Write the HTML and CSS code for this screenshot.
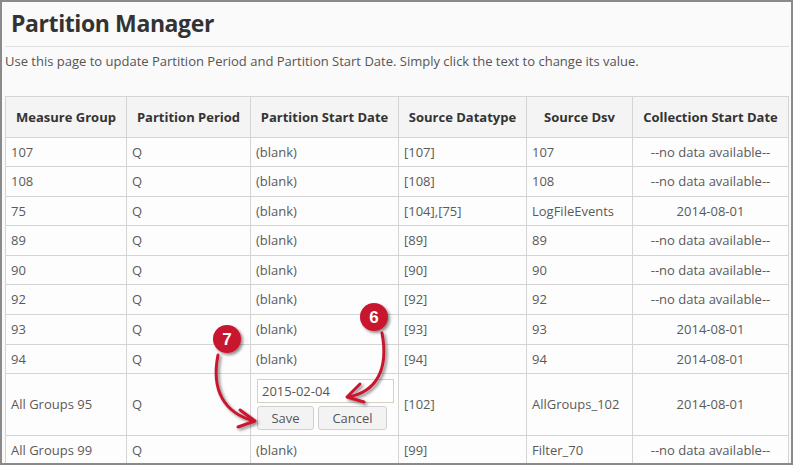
FILE: index.html
```html
<!DOCTYPE html>
<html>
<head>
<meta charset="utf-8">
<link rel="stylesheet" href="styles.css">
</head>
<body>
<div class="frame">
  <div class="page">
    <h1 class="title">Partition Manager</h1>
    <hr class="rule">
    <p class="intro">Use this page to update Partition Period and Partition Start Date. Simply click the text to change its value.</p>
    <table class="grid">
      <colgroup>
        <col class="c1"><col class="c2"><col class="c3"><col class="c4"><col class="c5"><col class="c6">
      </colgroup>
      <thead>
        <tr><th>Measure Group</th><th>Partition Period</th><th>Partition Start Date</th><th>Source Datatype</th><th>Source Dsv</th><th>Collection Start Date</th></tr>
      </thead>
      <tbody>
        <tr><td>107</td><td>Q</td><td>(blank)</td><td>[107]</td><td>107</td><td class="ctr">--no data available--</td></tr>
        <tr><td>108</td><td>Q</td><td>(blank)</td><td>[108]</td><td>108</td><td class="ctr">--no data available--</td></tr>
        <tr><td>75</td><td>Q</td><td>(blank)</td><td>[104],[75]</td><td>LogFileEvents</td><td class="ctr">2014-08-01</td></tr>
        <tr><td>89</td><td>Q</td><td>(blank)</td><td>[89]</td><td>89</td><td class="ctr">--no data available--</td></tr>
        <tr><td>90</td><td>Q</td><td>(blank)</td><td>[90]</td><td>90</td><td class="ctr">--no data available--</td></tr>
        <tr><td>92</td><td>Q</td><td>(blank)</td><td>[92]</td><td>92</td><td class="ctr">--no data available--</td></tr>
        <tr><td>93</td><td>Q</td><td>(blank)</td><td>[93]</td><td>93</td><td class="ctr">2014-08-01</td></tr>
        <tr><td>94</td><td>Q</td><td>(blank)</td><td>[94]</td><td>94</td><td class="ctr">2014-08-01</td></tr>
        <tr><td>All Groups 95</td><td>Q</td><td class="edit">
          <div class="field">2015-02-04</div>
          <div class="btns"><span class="btn save">Save</span><span class="btn cancel">Cancel</span></div>
        </td><td>[102]</td><td>AllGroups_102</td><td class="ctr">2014-08-01</td></tr>
        <tr><td>All Groups 99</td><td>Q</td><td>(blank)</td><td>[99]</td><td>Filter_70</td><td class="ctr">--no data available--</td></tr>
      </tbody>
    </table>
  </div>
  <svg class="notes" width="793" height="465" viewBox="0 0 793 465">
    <defs>
      <filter id="sh" x="-30%" y="-30%" width="160%" height="160%">
        <feDropShadow dx="2" dy="2" stdDeviation="1.6" flood-color="#000" flood-opacity="0.45"/>
      </filter>
    </defs>
    <g filter="url(#sh)" fill="none" stroke="#c8142f" stroke-width="3" stroke-linecap="round" stroke-linejoin="round">
      <path d="M218 355 C211 390 224 413 254 421"/>
      <path d="M240 410 L255 421 L238 427"/>
      <path d="M382 333 C389 370 376 392 348 397"/>
      <path d="M360 384 L347 397 L364 402"/>
    </g>
    <g filter="url(#sh)">
      <circle cx="227" cy="339" r="14" fill="#c8142f"/>
      <circle cx="374" cy="317" r="14" fill="#c8142f"/>
    </g>
    <text x="227" y="345" class="num">7</text>
    <text x="374" y="323" class="num">6</text>
  </svg>
</div>
</body>
</html>
```
FILE: styles.css
```css
html, body {
  margin: 0;
  padding: 0;
}
body {
  font-family: "Open Sans", "Liberation Sans", sans-serif;
  color: #555;
}
.frame {
  position: relative;
  width: 793px;
  height: 465px;
  box-sizing: border-box;
  border: 2px solid #8a8a8a;
  background: #fafafa;
  overflow: hidden;
}
.page {
  padding: 0 2px 0 3px;
}
.title {
  margin: 0;
  padding: 5px 0 0 6px;
  font-size: 23px;
  letter-spacing: -0.4px;
  line-height: 32px;
  font-weight: 700;
  color: #333;
}
.rule {
  margin: 7px 0 0 0;
  border: 0;
  border-top: 1px solid #e2e2e2;
  height: 0;
}
.intro {
  margin: 5px 0 0 0;
  font-size: 13px;
  line-height: 18px;
  color: #555;
}
.grid {
  margin-top: 26px;
  width: 783px;
  table-layout: fixed;
  border-collapse: collapse;
  border: 1px solid #cfcfcf;
  background: #fdfdfd;
  font-size: 13px;
  line-height: 18.57px;
}
.c1 { width: 121px; }
.c2 { width: 124px; }
.c3 { width: 148px; }
.c4 { width: 128px; }
.c5 { width: 106px; }
.c6 { width: 156px; }
.grid th {
  background: #f4f4f4;
  color: #333;
  font-weight: 700;
  text-align: center;
  padding: 11px 5px 10px;
  border: 1px solid #d4d4d4;
  white-space: nowrap;
}
.grid td {
  padding: 5px 5px 5px 5px;
  border: 1px solid #d4d4d4;
  color: #5a5a5a;
  vertical-align: middle;
  white-space: nowrap;
}
.grid td.ctr {
  text-align: center;
}
.grid td.edit {
  padding: 5px 5px 5px 6px;
}
.field {
  width: 131px;
  height: 22px;
  border: 1px solid #d3d0c4;
  background: #fff;
  padding-left: 4px;
  box-sizing: content-box;
  line-height: 22px;
  color: #555;
}
.btns {
  display: flex;
  gap: 4px;
  margin-top: 3px;
}
.btn {
  display: block;
  height: 22px;
  line-height: 22px;
  border: 1px solid #cfcfcf;
  border-radius: 3px;
  background: #f3f3f3;
  text-align: center;
  color: #555;
}
.save { width: 55px; }
.cancel { width: 67px; }
.notes {
  position: absolute;
  left: -2px;
  top: -2px;
  pointer-events: none;
}
.num {
  font-family: "Liberation Sans", Arial, sans-serif;
  font-weight: 700;
  font-size: 17px;
  fill: #fff;
  text-anchor: middle;
}
```
